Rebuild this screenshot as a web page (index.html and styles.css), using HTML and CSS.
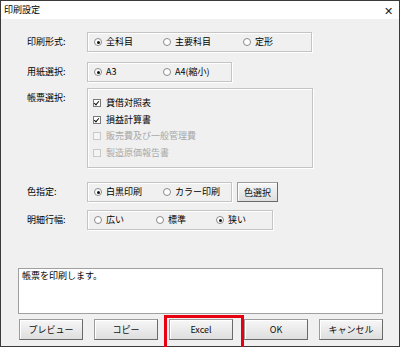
FILE: index.html
```html
<!DOCTYPE html>
<html lang="ja">
<head>
<meta charset="utf-8">
<link rel="stylesheet" href="styles.css">
</head>
<body>
<div class="window">
  <div class="titlebar">
    <span class="title">印刷設定</span>
    <span class="close">✕</span>
  </div>
  <div class="content">
    <div class="row r1">
      <div class="label">印刷形式:</div>
      <div class="frame f1">
        <div class="opt o69"><span class="radio on"></span>全科目</div>
        <div class="opt o80"><span class="radio"></span>主要科目</div>
        <div class="opt"><span class="radio"></span>定形</div>
      </div>
    </div>
    <div class="row r2">
      <div class="label">用紙選択:</div>
      <div class="frame f2">
        <div class="opt o69"><span class="radio on"></span>A3</div>
        <div class="opt"><span class="radio"></span>A4(縮小)</div>
      </div>
    </div>
    <div class="row r3">
      <div class="label">帳票選択:</div>
      <div class="frame f3">
        <div class="chk"><span class="box on"></span>貸借対照表</div>
        <div class="chk"><span class="box on"></span>損益計算書</div>
        <div class="chk dis"><span class="box"></span>販売費及び一般管理費</div>
        <div class="chk dis"><span class="box"></span>製造原価報告書</div>
      </div>
    </div>
    <div class="row r4">
      <div class="label">色指定:</div>
      <div class="frame f2">
        <div class="opt o69"><span class="radio on"></span>白黒印刷</div>
        <div class="opt"><span class="radio"></span>カラー印刷</div>
      </div>
      <button class="btn small">色選択</button>
    </div>
    <div class="row r5">
      <div class="label">明細行幅:</div>
      <div class="frame f5">
        <div class="opt o62"><span class="radio"></span>広い</div>
        <div class="opt o60"><span class="radio"></span>標準</div>
        <div class="opt"><span class="radio on"></span>狭い</div>
      </div>
    </div>
    <div class="message">帳票を印刷します。</div>
    <div class="buttons">
      <button class="btn">プレビュー</button>
      <button class="btn">コピー</button>
      <div class="hl"><button class="btn">Excel</button></div>
      <button class="btn">OK</button>
      <button class="btn">キャンセル</button>
    </div>
  </div>
</div>
</body>
</html>
```
FILE: styles.css
```css
* { box-sizing: border-box; }
html, body { margin: 0; padding: 0; }
body {
  width: 400px;
  height: 347px;
  font-family: "Noto Sans CJK JP", "Noto Sans", sans-serif;
  font-size: 9px;
  color: #000;
}
.window {
  width: 400px;
  height: 347px;
  border: 1px solid #3a3a3a;
  display: flex;
  flex-direction: column;
  background: #f0f0f0;
}
.titlebar {
  height: 18px;
  background: #fff;
  display: flex;
  align-items: center;
  justify-content: space-between;
  padding: 0 6px 0 3px;
  flex: none;
}
.title { font-size: 9px; line-height: 18px; }
.close { font-size: 11px; color: #222; }
.content {
  flex: 1;
  padding: 13px 16px 0 16px;
  display: flex;
  flex-direction: column;
}
.row {
  display: flex;
  align-items: flex-start;
  padding-left: 10px;
}
.r2 { margin-top: 10px; }
.r3 { margin-top: 6px; }
.r4 { margin-top: 14px; }
.r5 { margin-top: 8px; }
.label {
  width: 60px;
  height: 20px;
  line-height: 20px;
}
.r3 .label { line-height: 19px; }
.frame {
  border: 1px solid #c4c4c4;
  box-shadow: inset 1px 1px 0 #fff, 1px 1px 0 #fff;
  height: 20px;
  display: flex;
  align-items: center;
  padding-left: 6px;
}
.f1 { width: 225px; }
.f2 { width: 145px; }
.f5 { width: 186px; }
.f3 {
  width: 226px;
  height: 80px;
  flex-direction: column;
  align-items: flex-start;
  padding: 6px 0 0 5px;
}
.opt {
  display: flex;
  align-items: center;
  line-height: 18px;
}
.o69 { width: 69px; }
.o80 { width: 80px; }
.o62 { width: 62px; }
.o60 { width: 60px; }
.radio {
  width: 8px;
  height: 8px;
  border-radius: 50%;
  border: 1px solid #8a8a8a;
  background: #fff;
  margin-right: 4px;
  position: relative;
  flex: none;
}
.radio.on::after {
  content: "";
  position: absolute;
  left: 1.5px;
  top: 1.5px;
  width: 3px;
  height: 3px;
  border-radius: 50%;
  background: #111;
}
.chk {
  display: flex;
  align-items: center;
  height: 16.5px;
  line-height: 16px;
}
.box {
  width: 8px;
  height: 8px;
  border: 1px solid #7a7a7a;
  background: #fff;
  margin-right: 5px;
  position: relative;
  flex: none;
}
.box.on::after {
  content: "";
  position: absolute;
  left: 1px;
  top: 0px;
  width: 2px;
  height: 4px;
  border: solid #111;
  border-width: 0 1.5px 1.5px 0;
  transform: rotate(40deg);
}
.chk.dis { color: #a8a8a8; }
.chk.dis .box { border-color: #c8c8c8; background: #f4f4f4; }
.btn {
  font-family: "Noto Sans CJK JP", "Noto Sans", sans-serif;
  font-size: 9px;
  color: #111;
  width: 64px;
  height: 21px;
  padding: 0;
  border: 1px solid #9c9c9c;
  border-right-color: #6a6a6a;
  border-bottom-color: #6a6a6a;
  background: linear-gradient(#f7f7f7, #dedede);
  box-shadow: inset 1px 1px 0 #fff;
}
.btn.small {
  width: 41px;
  height: 20px;
  margin-left: 5px;
}
.message {
  margin-top: 38px;
  margin-left: 1px;
  width: 365px;
  height: 46px;
  background: #fff;
  border: 1px solid #a0a0a0;
  padding: 1px 3px;
  line-height: 12px;
}
.buttons {
  margin-top: 5px;
  display: flex;
  gap: 11px;
  padding-left: 2px;
}
.hl {
  position: relative;
  width: 64px;
  height: 21px;
}
.hl::after {
  content: "";
  position: absolute;
  left: -5px;
  top: -4px;
  width: 74px;
  height: 31px;
  border: 3px solid #e60012;
}
```
